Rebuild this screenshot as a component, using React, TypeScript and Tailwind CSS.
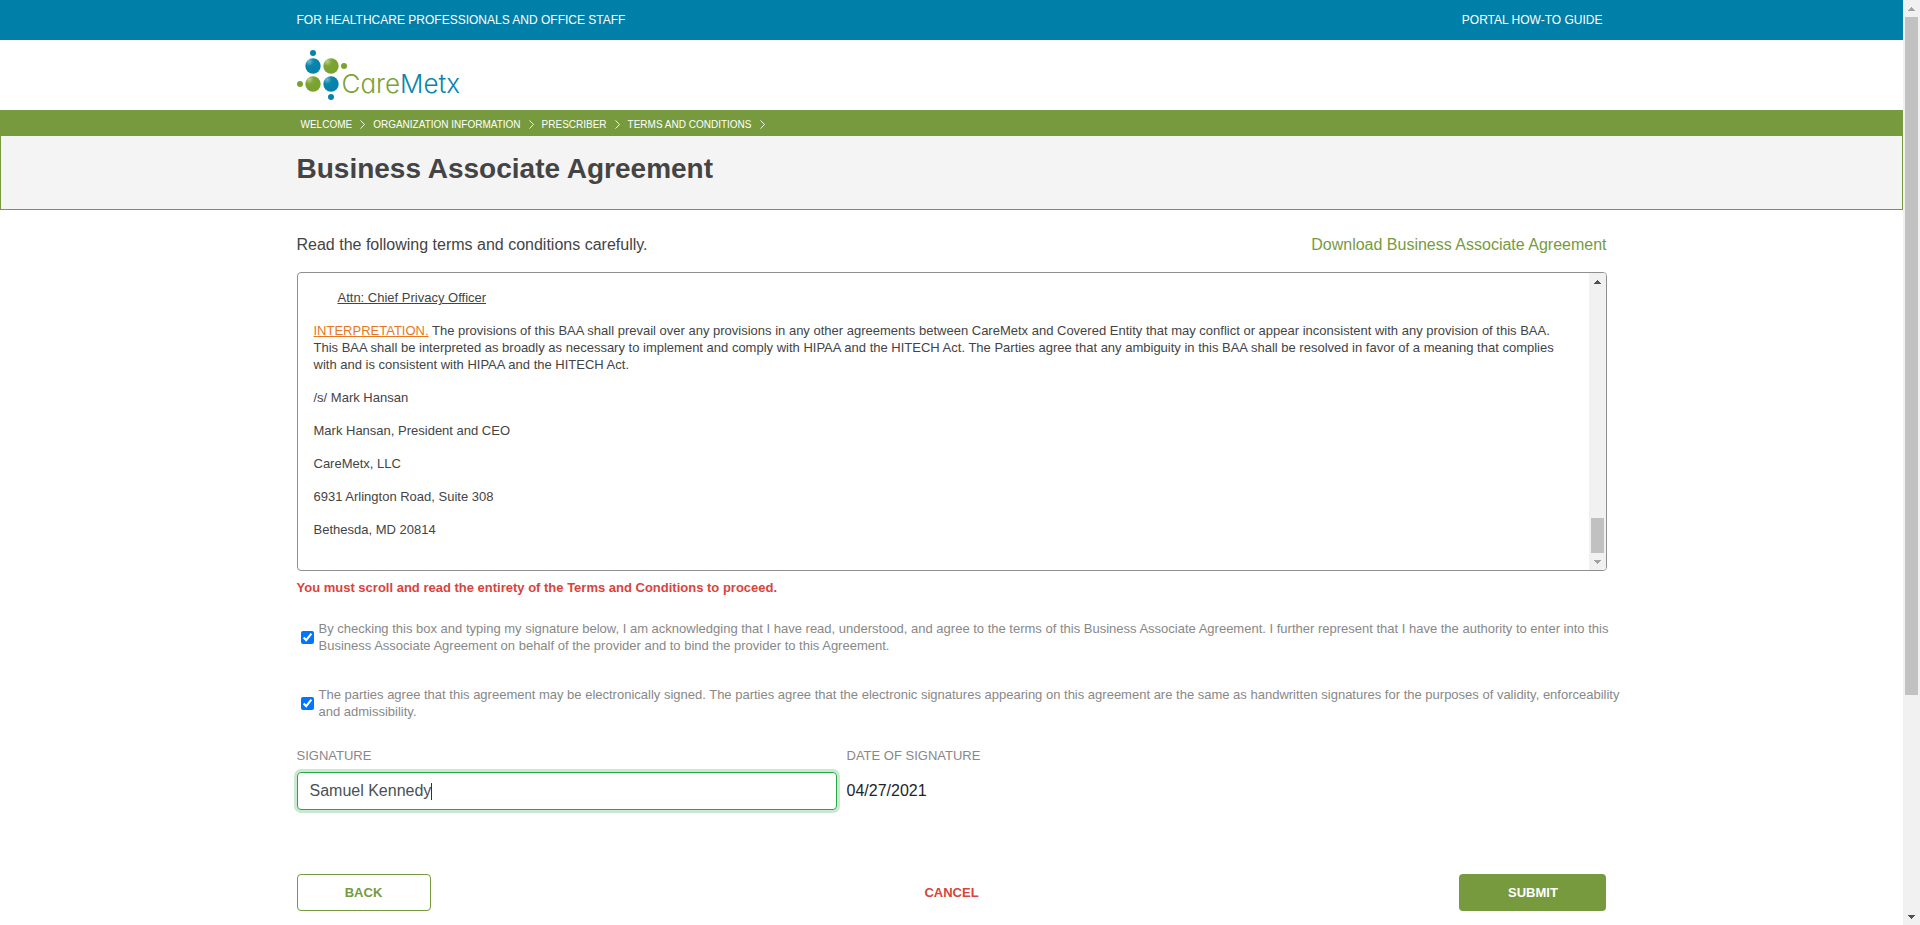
import React, { useState } from "react";

function ArrowIcon({ down = false, muted = false }: { down?: boolean; muted?: boolean }) {
  return (
    <svg viewBox="0 0 7 4" className={muted ? "h-1 w-[7px] text-[#a3a3a3]" : "h-1 w-[7px] text-[#505050]"} fill="currentColor" shapeRendering="crispEdges" aria-hidden="true">
      <path d={down ? "M0 0h7v1H0zM1 1h5v1H1zM2 2h3v1H2zM3 3h1v1H3z" : "M3 0h1v1H3zM2 1h3v1H2zM1 2h5v1H1zM0 3h7v1H0z"} />
    </svg>
  );
}

function ScrollTrack({ before, thumb, after }: { before: number; thumb: number; after: number }) {
  return (
    <div className="flex w-[17px] shrink-0 flex-col bg-[#f1f1f1]" aria-hidden="true">
      <div className="flex h-[17px] shrink-0 items-center justify-center">
        <ArrowIcon muted={before === 0} />
      </div>
      <div style={{ flexGrow: before, flexBasis: 0 }} />
      <div className="mx-0.5 bg-[#c1c1c1]" style={{ flexGrow: thumb, flexBasis: 0 }} />
      <div style={{ flexGrow: after, flexBasis: 0 }} />
      <div className="flex h-[17px] shrink-0 items-center justify-center">
        <ArrowIcon down muted={after === 0} />
      </div>
    </div>
  );
}

function Container({ className = "", children }: { className?: string; children: React.ReactNode }) {
  return <div className={`mx-auto w-full max-w-[1310px] ${className}`}>{children}</div>;
}

function Logo() {
  return (
    <a href="#home" className="flex items-start" aria-label="CareMetx home">
      <svg viewBox="0 0 50 50" className="h-[50px] w-[50px] shrink-0" aria-hidden="true">
        <defs>
          <radialGradient id="blue" cx="0.25" cy="0.2" r="0.5">
            <stop offset="0" stopColor="#6fb8d2" />
            <stop offset="0.6" stopColor="#0a86ad" />
            <stop offset="1" stopColor="#0783ab" />
          </radialGradient>
          <radialGradient id="green" cx="0.25" cy="0.2" r="0.5">
            <stop offset="0" stopColor="#b8d08a" />
            <stop offset="0.6" stopColor="#7ea637" />
            <stop offset="1" stopColor="#7aa22f" />
          </radialGradient>
        </defs>
        <circle cx="16" cy="3" r="3" fill="#0783ab" />
        <circle cx="16" cy="16" r="7.7" fill="url(#blue)" />
        <circle cx="34" cy="16" r="7.7" fill="url(#green)" />
        <circle cx="47" cy="16" r="3" fill="#7aa22f" />
        <circle cx="3" cy="34" r="3" fill="#7aa22f" />
        <circle cx="16" cy="34" r="7.7" fill="url(#green)" />
        <circle cx="34" cy="34" r="7.7" fill="url(#blue)" />
        <circle cx="34" cy="47" r="3" fill="#0783ab" />
      </svg>
      <span className="-ml-[5px] pt-[18px] font-['Inter',sans-serif] text-[26px] leading-8 font-light text-[#7ba333] [font-feature-settings:'cv11']">
        Care<span className="text-[#0a86ad]">Metx</span>
      </span>
    </a>
  );
}

const crumbs = ["WELCOME", "ORGANIZATION INFORMATION", "PRESCRIBER", "TERMS AND CONDITIONS"];

const signatory = [
  "/s/ Mark Hansan",
  "Mark Hansan, President and CEO",
  "CareMetx, LLC",
  "6931 Arlington Road, Suite 308",
  "Bethesda, MD 20814",
];

function Consent({ id, children }: { id: string; children: React.ReactNode }) {
  return (
    <div className="-mr-4 flex items-center gap-[5px] pl-1">
      <input id={id} type="checkbox" defaultChecked className="h-[13px] w-[13px] shrink-0" />
      <label htmlFor={id}>{children}</label>
    </div>
  );
}

export default function App() {
  const [signature, setSignature] = useState("Samuel Kennedy");
  return (
    <div className="flex h-screen bg-white font-['Liberation_Sans',Arial,sans-serif] text-[13px] leading-[17px] text-[#444]">
      <div className="min-w-0 flex-1 overflow-hidden">
        <header>
          <div className="bg-[#007fa8] text-xs font-medium text-white">
            <Container className="flex h-10 items-center justify-between pr-1">
              <span>FOR HEALTHCARE PROFESSIONALS AND OFFICE STAFF</span>
              <a href="#guide">PORTAL HOW-TO GUIDE</a>
            </Container>
          </div>
          <Container className="flex h-[70px] items-center">
            <Logo />
          </Container>
          <nav aria-label="Breadcrumb" className="bg-[#779a3e] text-white">
            <Container className="flex h-[26px] items-center gap-2 pt-0.5 pl-1 text-[10px] font-medium">
              {crumbs.map((label) => (
                <React.Fragment key={label}>
                  <a href="#step">{label}</a>
                  <svg viewBox="0 0 5 9" className="h-[9px] w-[5px]" fill="none" stroke="currentColor" strokeWidth="0.9" aria-hidden="true">
                    <path d="M.5.4 4.5 4.5.5 8.6" />
                  </svg>
                </React.Fragment>
              ))}
            </Container>
          </nav>
        </header>

        <div className="border-x border-b border-[#779a3e] bg-[#f4f4f4] pt-[17px] pb-6">
          <Container>
            <h1 className="text-[28px] leading-8 font-bold">Business Associate Agreement</h1>
          </Container>
        </div>

        <main>
          <Container>
            <div className="flex justify-between pt-[23px] pb-[15px] text-base">
              <p>Read the following terms and conditions carefully.</p>
              <a href="#download" className="text-[#779a3e]">Download Business Associate Agreement</a>
            </div>

            <section className="flex overflow-hidden rounded border border-[#8f8f8f]" aria-label="Agreement text">
              <div className="flex flex-1 flex-col gap-4 pt-4 pr-6 pb-8 pl-4">
                <p className="pl-6 underline">Attn: Chief Privacy Officer</p>
                <p>
                  <span className="text-[#e87722] underline">INTERPRETATION.</span> The provisions of this BAA shall prevail over any
                  provisions in any other agreements between CareMetx and Covered Entity that may conflict or appear inconsistent with any
                  provision of this BAA. This BAA shall be interpreted as broadly as necessary to implement and comply with HIPAA and the
                  HITECH Act. The Parties agree that any ambiguity in this BAA shall be resolved in favor of a meaning that complies with
                  and is consistent with HIPAA and the HITECH Act.
                </p>
                {signatory.map((line) => (
                  <p key={line}>{line}</p>
                ))}
              </div>
              <ScrollTrack before={229} thumb={35} after={0} />
            </section>

            <p className="pt-2 font-bold text-[#d9433d]">You must scroll and read the entirety of the Terms and Conditions to proceed.</p>

            <form onSubmit={(e) => e.preventDefault()}>
              <div className="flex flex-col gap-8 pt-6 text-[#888]">
                <Consent id="authority">
                  By checking this box and typing my signature below, I am acknowledging that I have read, understood, and agree to the
                  terms of this Business Associate Agreement. I further represent that I have the authority to enter into this Business
                  Associate Agreement on behalf of the provider and to bind the provider to this Agreement.
                </Consent>
                <Consent id="electronic">
                  The parties agree that this agreement may be electronically signed. The parties agree that the electronic signatures
                  appearing on this agreement are the same as handwritten signatures for the purposes of validity, enforceability and
                  admissibility.
                </Consent>
              </div>

              <div className="flex gap-2.5 pt-[27px]">
                <div className="flex w-[540px] flex-col gap-2">
                  <label htmlFor="signature" className="text-[#888]">SIGNATURE</label>
                  <div className="relative">
                    <input
                      id="signature"
                      type="text"
                      value={signature}
                      onChange={(e) => setSignature(e.target.value)}
                      className="h-[38px] w-full rounded border border-[#28a745] px-3 text-base text-[#495057] shadow-[0_0_0_3px_rgba(40,167,69,0.25)] outline-none"
                    />
                    <span className="pointer-events-none absolute inset-y-0 left-0 flex items-center pl-[13px] text-base" aria-hidden="true">
                      <span className="invisible">{signature}</span>
                      <span className="h-[17px] w-px bg-[#333]" />
                    </span>
                  </div>
                </div>
                <dl className="flex flex-col gap-2">
                  <dt className="text-[#888]">DATE OF SIGNATURE</dt>
                  <dd className="flex h-[38px] items-center text-base text-[#212529]">04/27/2021</dd>
                </dl>
              </div>

              <div className="grid grid-cols-3 items-center pt-16 pb-[13px] font-bold">
                <button type="button" className="h-[37px] w-[134px] rounded border border-[#779a3e] text-[#779a3e]">BACK</button>
                <button type="button" className="justify-self-center text-[#d9433d]">CANCEL</button>
                <button type="submit" className="h-[37px] w-[147px] justify-self-end rounded bg-[#779a3e] text-white">SUBMIT</button>
              </div>
            </form>
          </Container>
        </main>
      </div>
      <ScrollTrack before={0} thumb={678} after={213} />
    </div>
  );
}
